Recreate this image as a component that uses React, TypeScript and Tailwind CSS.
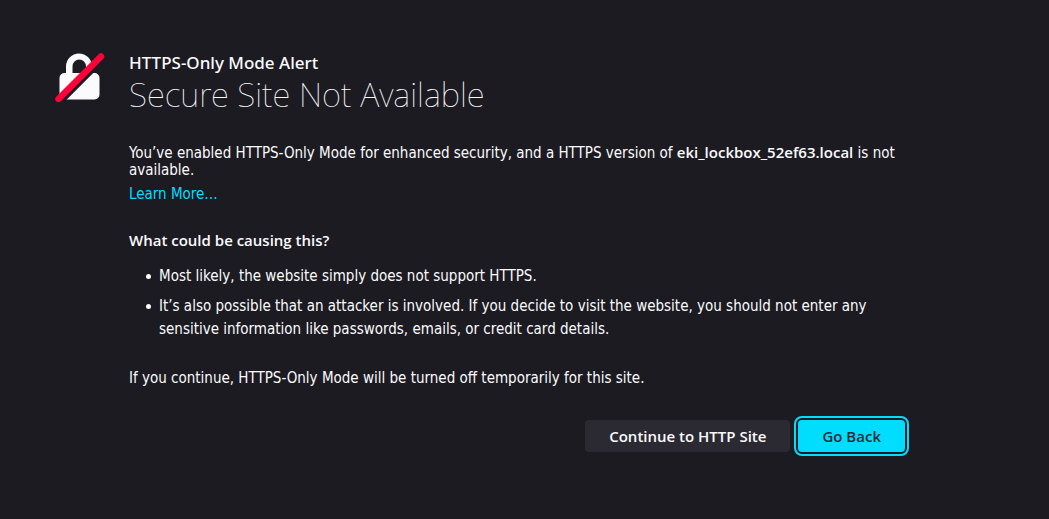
const causes = [
  "Most likely, the website simply does not support HTTPS.",
  "It’s also possible that an attacker is involved. If you decide to visit the website, you should not enter any sensitive information like passwords, emails, or credit card details.",
];

function LockSlashedIcon() {
  return (
    <svg viewBox="0 0 50 50" className="size-[50px] shrink-0" aria-hidden="true">
      <path
        fill="#fbfbfe"
        d="M11 21V14.500a13 13 0 0 1 26 0V21h2.500a5 5 0 0 1 5 5V42.500a5 5 0 0 1-5 5H9.500a5 5 0 0 1-5-5V26a5 5 0 0 1 5-5zM17.500 21h13.500V14.500a6.750 7 0 0 0-13.500 0z"
      />
      <path d="M0 55 55 0" stroke="#1c1b22" strokeWidth="6" />
      <path d="M3.500 47 46 4.500" stroke="#ff0039" strokeWidth="6.500" strokeLinecap="round" />
    </svg>
  );
}

export default function App() {
  return (
    <div className="min-h-screen bg-[#1c1b22] px-4 pt-[52px] pb-16 font-['DejaVu_Sans_Condensed','Noto_Sans',sans-serif] text-[15px] text-[#fbfbfe]">
      <main className="mx-auto flex max-w-[939px] items-start gap-6 md:pr-[85px]">
        <LockSlashedIcon />
        <div className="min-w-0 flex-1">
          <header className="font-['Noto_Sans',sans-serif]">
            <p className="text-[17px] leading-[22px] font-medium">HTTPS-Only Mode Alert</p>
            <h1 className="text-[33px] leading-[42px] font-thin">Secure Site Not Available</h1>
          </header>

          <p className="mt-7 leading-[17px]">
            You’ve enabled HTTPS-Only Mode for enhanced security, and a HTTPS version of{" "}
            <b className="font-['Open_Sans',sans-serif] font-semibold">eki_lockbox_52ef63.local</b>{" "}
            is not available.
          </p>
          <a href="#learn-more" className="mt-1 block w-fit leading-[22px] text-[#00ddff]">
            Learn More…
          </a>

          <h2 className="mt-6 font-['Open_Sans',sans-serif] leading-[22px] font-semibold">
            What could be causing this?
          </h2>
          <ul className="mt-[14px] space-y-[7px] pl-[17px] leading-[23px]">
            {causes.map((cause) => (
              <li key={cause} className="flex gap-2">
                <span className="mt-[9px] size-[5px] shrink-0 rounded-full bg-[#fbfbfe]" />
                <span className="max-w-[720px]">{cause}</span>
              </li>
            ))}
          </ul>

          <p className="mt-[27px] leading-5">
            If you continue, HTTPS-Only Mode will be turned off temporarily for this site.
          </p>

          <div className="mt-8 flex flex-wrap justify-end gap-2 pr-1 font-['Open_Sans',sans-serif]">
            <button type="button" className="h-8 rounded bg-[#2b2a33] px-6 font-semibold">
              Continue to HTTP Site
            </button>
            <button
              type="button"
              className="h-8 rounded bg-[#00ddff] px-6 font-semibold text-[#2b2a33] outline-2 outline-offset-2 outline-[#00ddff]"
            >
              Go Back
            </button>
          </div>
        </div>
      </main>
    </div>
  );
}
